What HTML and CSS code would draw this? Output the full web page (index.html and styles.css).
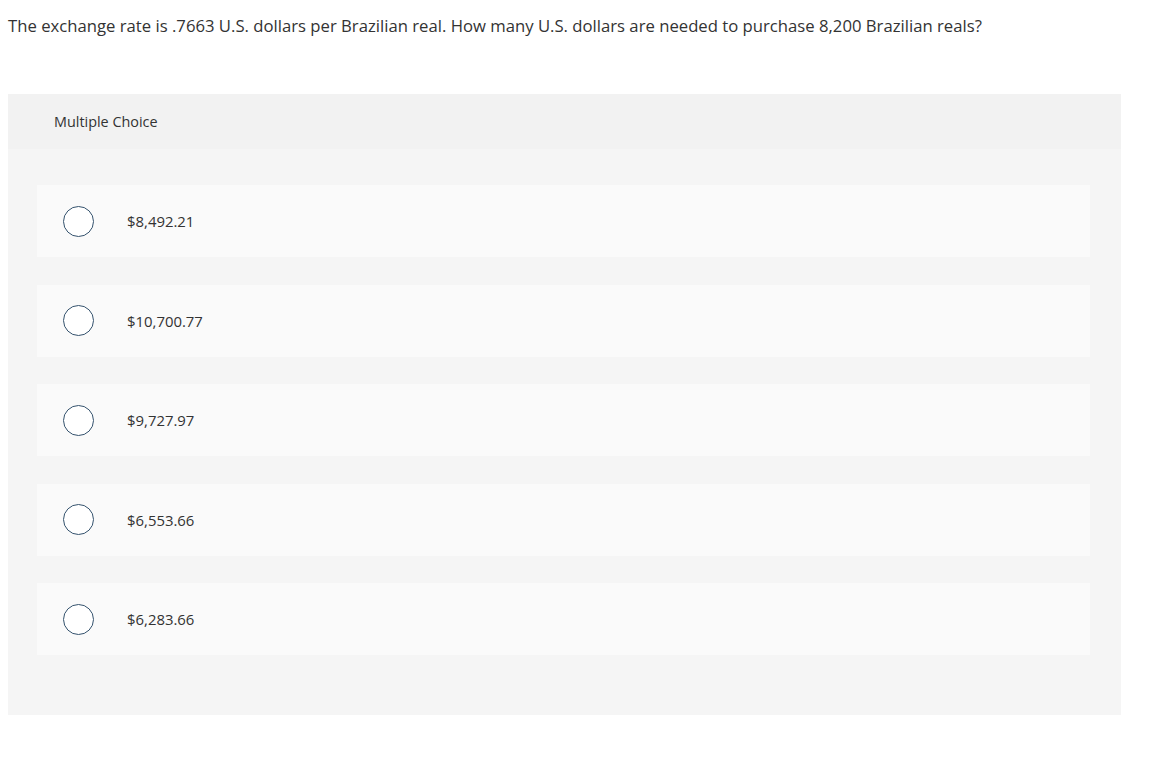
FILE: index.html
```html
<!DOCTYPE html>
<html>
<head>
<meta charset="utf-8">
<link rel="stylesheet" href="styles.css">
</head>
<body>
<p class="question">The exchange rate is .7663 U.S. dollars per Brazilian real. How many U.S. dollars are needed to purchase 8,200 Brazilian reals?</p>
<div class="panel">
  <div class="panel-head">Multiple Choice</div>
  <div class="options">
    <div class="option"><span class="radio"></span><span class="label">$8,492.21</span></div>
    <div class="option"><span class="radio"></span><span class="label">$10,700.77</span></div>
    <div class="option"><span class="radio"></span><span class="label">$9,727.97</span></div>
    <div class="option"><span class="radio"></span><span class="label">$6,553.66</span></div>
    <div class="option"><span class="radio"></span><span class="label">$6,283.66</span></div>
  </div>
</div>
</body>
</html>
```
FILE: styles.css
```css
body {
  margin: 0;
  padding: 0 37px 0 8px;
  background: #ffffff;
  font-family: "Open Sans", "Liberation Sans", sans-serif;
  color: #333333;
}
.question {
  margin: 0;
  padding-top: 15px;
  height: 94px;
  box-sizing: border-box;
  font-size: 16.7px;
  line-height: 22px;
  color: #333333;
}
.panel {
  background: #f5f5f5;
  padding-bottom: 60px;
}
.panel-head {
  background: #f2f2f2;
  height: 55px;
  box-sizing: border-box;
  padding-left: 46px;
  display: flex;
  align-items: center;
  font-size: 14.4px;
  color: #333333;
}
.options {
  display: flex;
  flex-direction: column;
  gap: 27.5px;
  padding: 36px 31px 0 29px;
}
.option {
  background: #fafafa;
  height: 72px;
  display: flex;
  align-items: center;
  padding-left: 26px;
}
.radio {
  width: 29px;
  height: 29px;
  border: 1.5px solid #34526d;
  border-radius: 50%;
  background: #ffffff;
  flex: none;
}
.label {
  margin-left: 33px;
  font-size: 14.9px;
  color: #333333;
}
```
